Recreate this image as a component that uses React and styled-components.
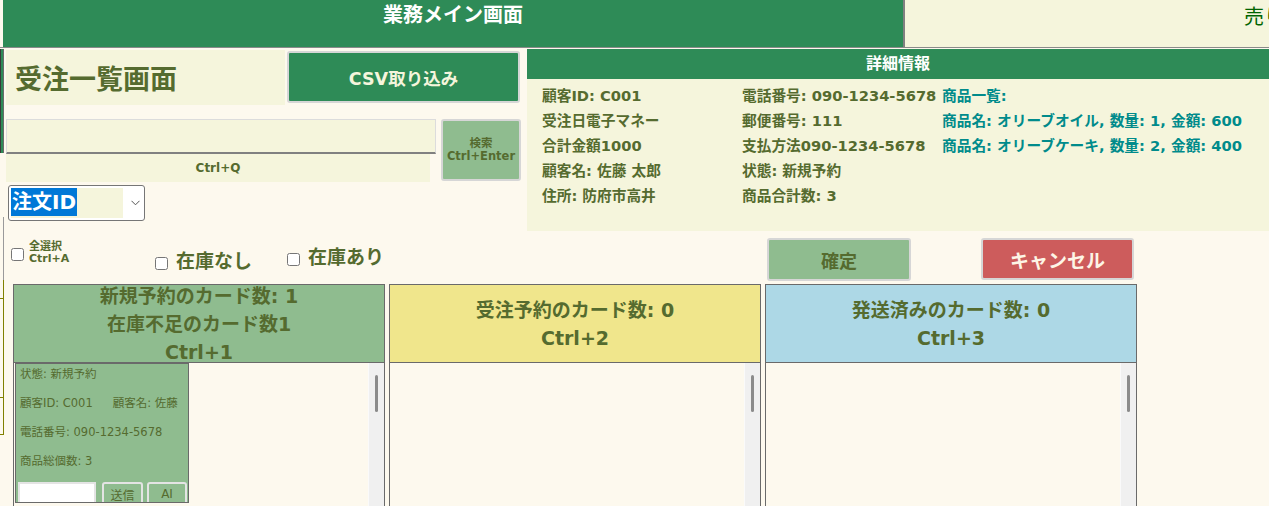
import React from "react";
import styled, { createGlobalStyle } from "styled-components";

const GREEN = "#2e8b57";
const SEA = "#8fbc8f";
const OLIVE = "#556b2f";
const BEIGE = "#f5f5dc";
const TEAL = "#008b8b";
const CREAM = "#fdf9ee";

const Global = createGlobalStyle`
  html, body { margin: 0; padding: 0; overflow: hidden; background: ${CREAM}; }
  body { font-family: "DejaVu Sans", "Noto Sans CJK JP", sans-serif; color: ${OLIVE}; }
  * { box-sizing: border-box; }
`;

const Page = styled.div`
  width: 1269px;
  height: 506px;
  overflow: hidden;
`;

const TabBar = styled.div`
  display: flex;
  height: 48px;
  padding-left: 3px;
  border-bottom: 1px solid #8a8a8a;
  margin-bottom: 1px;
  overflow: hidden;
`;

const Tab = styled.div`
  flex: 0 0 900px;
  height: 100%;
  background: ${(p) => (p.$active ? GREEN : BEIGE)};
  color: ${(p) => (p.$active ? "#ffffff" : "#006400")};
  font-weight: ${(p) => (p.$active ? 700 : 400)};
  font-size: 20px;
  line-height: 24px;
  padding-top: ${(p) => (p.$active ? 3 : 5)}px;
  text-align: center;
  white-space: nowrap;
  border-left: ${(p) => (p.$active ? "none" : "2px solid #808080")};
`;

const Main = styled.div`
  display: flex;
`;

const EdgeStrip = styled.div`
  flex: 0 0 4px;
  display: flex;
  flex-direction: column;
`;

const EdgeTab = styled.div`
  height: 104px;
  background: ${GREEN};
  border-left: 1px solid #3a3a3a;
  border-right: 1px solid #6a6a6a;
`;

const EdgeBox = styled.div`
  margin-top: 64px;
  height: 63px;
  border-right: 1px solid #9a9a9a;
`;

const EdgeRow = styled.div`
  height: ${(p) => p.$h}px;
  border-right: 1px solid #808000;
  border-bottom: 1px solid #808000;
`;

const Content = styled.div`
  flex: 1;
  min-width: 0;
  padding-left: 2px;
`;

const TopSection = styled.div`
  display: flex;
  align-items: flex-start;
  gap: 6px;
`;

const LeftPanel = styled.div`
  width: 515px;
  padding-top: 1px;
`;

const TitleRow = styled.div`
  display: flex;
  align-items: flex-start;
  height: 55px;
`;

const TitleBlock = styled.div`
  width: 279px;
  height: 55px;
  background: ${BEIGE};
  display: flex;
  align-items: center;
  padding-left: 9px;
  font-size: 27px;
  font-weight: 700;
  color: ${OLIVE};
`;

const CsvButton = styled.button`
  margin: 1px 0 0 2px;
  width: 233px;
  height: 52px;
  background: ${GREEN};
  border: 2px solid #d6d6d6;
  border-radius: 3px;
  color: ${BEIGE};
  font-family: inherit;
  font-size: 17.5px;
  font-weight: 700;
`;

const SearchRow = styled.div`
  display: flex;
  align-items: flex-start;
  margin-top: 14px;
`;

const SearchCol = styled.div`
  width: 430px;
`;

const SearchInput = styled.div`
  height: 35px;
  background: ${BEIGE};
  border: 1px solid #dcdcdc;
  border-bottom: 2px solid #808080;
`;

const ShortcutLabel = styled.div`
  width: 424px;
  height: 28px;
  background: ${BEIGE};
  text-align: center;
  font-size: 12px;
  font-weight: 700;
  line-height: 28px;
`;

const SearchButton = styled.button`
  margin-left: 5px;
  width: 80px;
  height: 62px;
  background: ${SEA};
  border: 2px solid #d6d6d6;
  border-radius: 3px;
  color: ${OLIVE};
  font-family: inherit;
  font-size: 11.5px;
  font-weight: 700;
  line-height: 13px;
  padding: 0;
`;

const SelectBox = styled.div`
  margin: 3px 0 0 2px;
  width: 137px;
  height: 36px;
  background: #ffffff;
  border: 1px solid #767676;
  border-radius: 3px;
  display: flex;
  align-items: center;
  padding: 0 2px;
`;

const SelectValue = styled.div`
  width: 112px;
  height: 30px;
  background: ${BEIGE};
  display: flex;
  align-items: stretch;
`;

const Highlight = styled.span`
  background: #0078d7;
  color: #ffffff;
  font-size: 20px;
  font-weight: 700;
  line-height: 28px;
  padding: 0 1px;
  margin-bottom: 2px;
`;

const Chevron = styled.svg`
  margin-left: 8px;
`;

const DetailPanel = styled.div`
  flex: 1;
  height: 182px;
  background: ${BEIGE};
`;

const DetailHeader = styled.div`
  height: 30px;
  background: ${GREEN};
  color: #ffffff;
  text-align: center;
  font-size: 16px;
  font-weight: 700;
  line-height: 30px;
`;

const DetailGrid = styled.div`
  display: grid;
  grid-template-columns: 200px 200px 1fr;
  grid-auto-rows: 25px;
  padding: 4px 0 0 15px;
  font-size: 14.7px;
  font-weight: 700;
  line-height: 25px;
  white-space: nowrap;
`;

const Cell = styled.div`
  color: ${(p) => (p.$teal ? TEAL : OLIVE)};
`;

const ActionRow = styled.div`
  display: flex;
  align-items: flex-start;
  height: 43px;
  margin-top: 7px;
`;

const CheckGroup = styled.label`
  display: flex;
  align-items: flex-start;
  width: ${(p) => p.$w}px;
  margin-left: ${(p) => p.$ml || 0}px;
  gap: ${(p) => p.$gap}px;
`;

const Box = styled.input.attrs({ type: "checkbox" })`
  margin: ${(p) => p.$top}px 0 0 0;
  width: 13px;
  height: 13px;
`;

const CheckText = styled.span`
  margin-top: ${(p) => p.$top}px;
  font-size: ${(p) => p.$size}px;
  line-height: ${(p) => p.$lh}px;
  font-weight: 700;
  white-space: nowrap;
`;

const ActionButton = styled.button`
  width: ${(p) => p.$w}px;
  height: ${(p) => p.$h}px;
  margin-left: ${(p) => p.$ml || 0}px;
  background: ${(p) => p.$bg};
  color: ${(p) => p.$fg};
  border: 2px solid #d6d6d6;
  border-radius: 3px;
  font-family: inherit;
  font-size: ${(p) => p.$size}px;
  font-weight: 700;
`;

const Columns = styled.div`
  display: flex;
  gap: 4px;
  margin: 3px 0 0 7px;
`;

const Column = styled.div`
  width: 372px;
  border: 1px solid #6a6a6a;
  background: ${CREAM};
  display: flex;
  flex-direction: column;
`;

const ColumnHeader = styled.div`
  height: 78px;
  background: ${(p) => p.$bg};
  border-bottom: 1px solid #6a6a6a;
  display: flex;
  flex-direction: column;
  justify-content: center;
  overflow: hidden;
  text-align: center;
  font-size: 19px;
  font-weight: 700;
  line-height: 28px;
  white-space: nowrap;
`;

const ColumnBody = styled.div`
  display: flex;
  height: 220px;
`;

const CardArea = styled.div`
  flex: 1;
  padding-left: 1px;
`;

const ScrollTrack = styled.div`
  width: 16px;
  background: #f0f0f0;
  border-left: 1px solid #fafafa;
`;

const Thumb = styled.div`
  width: 3px;
  height: 37px;
  margin: 12px auto 0;
  background: #8b8b8b;
  border-radius: 2px;
`;

const Card = styled.div`
  width: 174px;
  height: 140px;
  background: ${SEA};
  border: 1px solid #6a6a6a;
  overflow: hidden;
  padding: 2px 0 0 4px;
  font-size: 11.5px;
  color: ${OLIVE};
`;

const CardLine = styled.div`
  line-height: 17px;
  margin-bottom: 12px;
  white-space: nowrap;
`;

const Gap = styled.span`
  display: inline-block;
  width: ${(p) => p.$w}px;
`;

const CardActions = styled.div`
  display: flex;
  margin-left: -2px;
`;

const CardInput = styled.div`
  width: 78px;
  height: 24px;
  background: #ffffff;
  border: 2px solid #e4e4e4;
`;

const CardButton = styled.button`
  width: ${(p) => p.$w}px;
  height: 24px;
  margin-left: ${(p) => p.$ml}px;
  background: ${SEA};
  border: 2px solid #e4e4e4;
  border-radius: 3px;
  color: ${OLIVE};
  font-family: inherit;
  font-size: 12px;
  padding: 0;
`;

const details = [
  ["顧客ID: C001", "電話番号: 090-1234-5678", "商品一覧:"],
  ["受注日電子マネー", "郵便番号: 111", "商品名: オリーブオイル, 数量: 1, 金額: 600"],
  ["合計金額1000", "支払方法090-1234-5678", "商品名: オリーブケーキ, 数量: 2, 金額: 400"],
  ["顧客名: 佐藤 太郎", "状態: 新規予約", ""],
  ["住所: 防府市高井", "商品合計数: 3", ""],
];

const columns = [
  { bg: SEA, lines: ["新規予約のカード数: 1", "在庫不足のカード数1", "Ctrl+1"], card: true },
  { bg: "#f0e68c", lines: ["受注予約のカード数: 0", "Ctrl+2"] },
  { bg: "#add8e6", lines: ["発送済みのカード数: 0", "Ctrl+3"] },
];

export default function App() {
  return (
    <Page>
      <Global />
      <TabBar>
        <Tab $active>業務メイン画面</Tab>
        <Tab>売り上げ・在庫管理画面</Tab>
      </TabBar>
      <Main>
        <EdgeStrip>
          <EdgeTab />
          <EdgeBox />
          <EdgeRow $h={19} />
          <EdgeRow $h={99} />
          <EdgeRow $h={37} />
        </EdgeStrip>
        <Content>
          <TopSection>
            <LeftPanel>
              <TitleRow>
                <TitleBlock>受注一覧画面</TitleBlock>
                <CsvButton>CSV取り込み</CsvButton>
              </TitleRow>
              <SearchRow>
                <SearchCol>
                  <SearchInput />
                  <ShortcutLabel>Ctrl+Q</ShortcutLabel>
                </SearchCol>
                <SearchButton>
                  検索
                  <br />
                  Ctrl+Enter
                </SearchButton>
              </SearchRow>
              <SelectBox>
                <SelectValue>
                  <Highlight>注文ID</Highlight>
                </SelectValue>
                <Chevron width="9" height="6" viewBox="0 0 9 6">
                  <path d="M0.5 0.8 L4.5 4.8 L8.5 0.8" fill="none" stroke="#555" strokeWidth="1" />
                </Chevron>
              </SelectBox>
            </LeftPanel>
            <DetailPanel>
              <DetailHeader>詳細情報</DetailHeader>
              <DetailGrid>
                {details.map((row, i) =>
                  row.map((t, j) => (
                    <Cell key={`${i}-${j}`} $teal={j === 2}>
                      {t}
                    </Cell>
                  ))
                )}
              </DetailGrid>
            </DetailPanel>
          </TopSection>

          <ActionRow>
            <CheckGroup $w={144} $ml={5} $gap={5}>
              <Box $top={10} />
              <CheckText $top={3} $size={11} $lh={12}>
                全選択
                <br />
                Ctrl+A
              </CheckText>
            </CheckGroup>
            <CheckGroup $w={132} $gap={8}>
              <Box $top={19} />
              <CheckText $top={13} $size={19} $lh={20}>
                在庫なし
              </CheckText>
            </CheckGroup>
            <CheckGroup $w={480} $gap={8}>
              <Box $top={15} />
              <CheckText $top={9} $size={19} $lh={20}>
                在庫あり
              </CheckText>
            </CheckGroup>
            <ActionButton $w={144} $h={43} $bg={SEA} $fg={OLIVE} $size={18}>
              確定
            </ActionButton>
            <ActionButton $w={153} $h={42} $ml={70} $bg="#cd5c5c" $fg="#fdf5e6" $size={19}>
              キャンセル
            </ActionButton>
          </ActionRow>

          <Columns>
            {columns.map((c, i) => (
              <Column key={i}>
                <ColumnHeader $bg={c.bg}>
                  {c.lines.map((l) => (
                    <div key={l}>{l}</div>
                  ))}
                </ColumnHeader>
                <ColumnBody>
                  <CardArea>
                    {c.card && (
                      <Card>
                        <CardLine>状態: 新規予約</CardLine>
                        <CardLine>
                          顧客ID: C001
                          <Gap $w={20} />
                          顧客名: 佐藤
                        </CardLine>
                        <CardLine>電話番号: 090-1234-5678</CardLine>
                        <CardLine>商品総個数: 3</CardLine>
                        <CardActions>
                          <CardInput />
                          <CardButton $w={41} $ml={6}>
                            送信
                          </CardButton>
                          <CardButton $w={40} $ml={4}>
                            AI
                          </CardButton>
                        </CardActions>
                      </Card>
                    )}
                  </CardArea>
                  <ScrollTrack>
                    <Thumb />
                  </ScrollTrack>
                </ColumnBody>
              </Column>
            ))}
          </Columns>
        </Content>
      </Main>
    </Page>
  );
}
